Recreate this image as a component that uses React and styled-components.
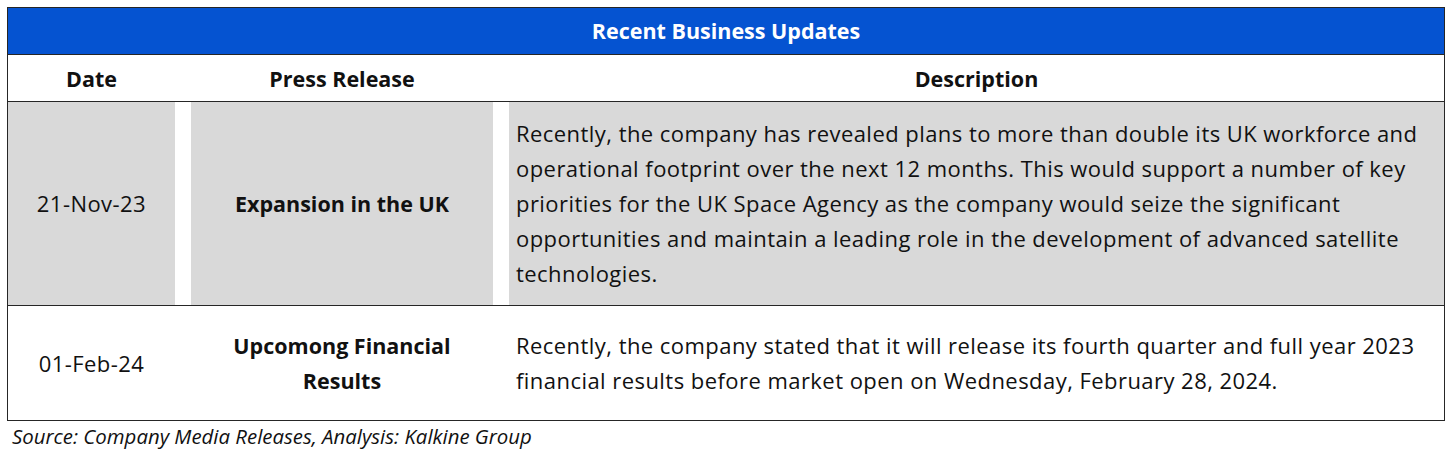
import React from 'react';
import styled, { createGlobalStyle } from 'styled-components';

const GlobalStyle = createGlobalStyle`
  body {
    margin: 0;
    background: #ffffff;
    font-family: 'Open Sans', 'Noto Sans', sans-serif;
    color: #111111;
  }
`;

const updates = [
  {
    date: '21-Nov-23',
    title: ['Expansion in the UK'],
    shaded: true,
    lines: [
      'Recently, the company has revealed plans to more than double its UK workforce and',
      'operational footprint over the next 12 months. This would support a number of key',
      'priorities for the UK Space Agency as the company would seize the significant',
      'opportunities and maintain a leading role in the development of advanced satellite',
      'technologies.',
    ],
  },
  {
    date: '01-Feb-24',
    title: ['Upcomong Financial', 'Results'],
    shaded: false,
    lines: [
      'Recently, the company stated that it will release its fourth quarter and full year 2023',
      'financial results before market open on Wednesday, February 28, 2024.',
    ],
  },
];

const App = () => {
  return (
    <>
      <GlobalStyle />
      <Page>
        <Table>
          <Title>Recent Business Updates</Title>
          <HeadRow>
            <HeadCell>Date</HeadCell>
            <Gap />
            <HeadCell>Press Release</HeadCell>
            <Gap />
            <HeadCell>Description</HeadCell>
          </HeadRow>
          {updates.map((u, i) => (
            <Row key={u.date} $height={i === 0 ? 203 : 114} $last={i === updates.length - 1}>
              <Cell $shaded={u.shaded} $center>{u.date}</Cell>
              <Gap />
              <Cell $shaded={u.shaded} $center $bold>
                {u.title.map((t) => (
                  <Line key={t}>{t}</Line>
                ))}
              </Cell>
              <Gap />
              <Cell $shaded={u.shaded}>
                {u.lines.map((t) => (
                  <Line key={t}>{t}</Line>
                ))}
              </Cell>
            </Row>
          ))}
        </Table>
        <Source>Source: Company Media Releases, Analysis: Kalkine Group</Source>
      </Page>
    </>
  );
};

const Page = styled.div`
  padding: 7px 9px 0 7px;
`;

const Table = styled.div`
  border: 1px solid #262626;
  width: 1436px;
`;

const Title = styled.div`
  height: 47px;
  box-sizing: border-box;
  padding-bottom: 1px;
  background: #0553d1;
  border-bottom: 1px solid #262626;
  color: #ffffff;
  font-weight: 700;
  font-size: 21.5px;
  display: flex;
  align-items: center;
  justify-content: center;
`;

const grid = `
  display: grid;
  grid-template-columns: 167px 16px 302px 16px 1fr;
`;

const HeadRow = styled.div`
  ${grid}
  height: 46px;
  border-bottom: 1px solid #262626;
`;

const HeadCell = styled.div`
  display: flex;
  align-items: center;
  justify-content: center;
  font-weight: 700;
  font-size: 21.5px;
`;

const Gap = styled.div`
  background: #ffffff;
`;

const Row = styled.div`
  ${grid}
  height: ${(p) => p.$height}px;
  border-bottom: ${(p) => (p.$last ? 'none' : '1px solid #262626')};
`;

const Cell = styled.div`
  background: ${(p) => (p.$shaded ? '#d9d9d9' : '#ffffff')};
  display: flex;
  flex-direction: column;
  justify-content: center;
  align-items: ${(p) => (p.$center ? 'center' : 'flex-start')};
  text-align: ${(p) => (p.$center ? 'center' : 'left')};
  padding: ${(p) => (p.$center ? '0' : '0 0 0 7px')};
  font-size: ${(p) => (p.$bold ? '21.5px' : '22px')};
  font-weight: ${(p) => (p.$bold ? 700 : 400)};
  letter-spacing: ${(p) => (p.$bold ? '0' : '0.45px')};
  line-height: 35px;
`;

const Line = styled.span`
  display: block;
  white-space: nowrap;
`;

const Source = styled.div`
  padding: 1px 0 0 5px;
  font-style: italic;
  font-size: 20.4px;
`;

export default App;
